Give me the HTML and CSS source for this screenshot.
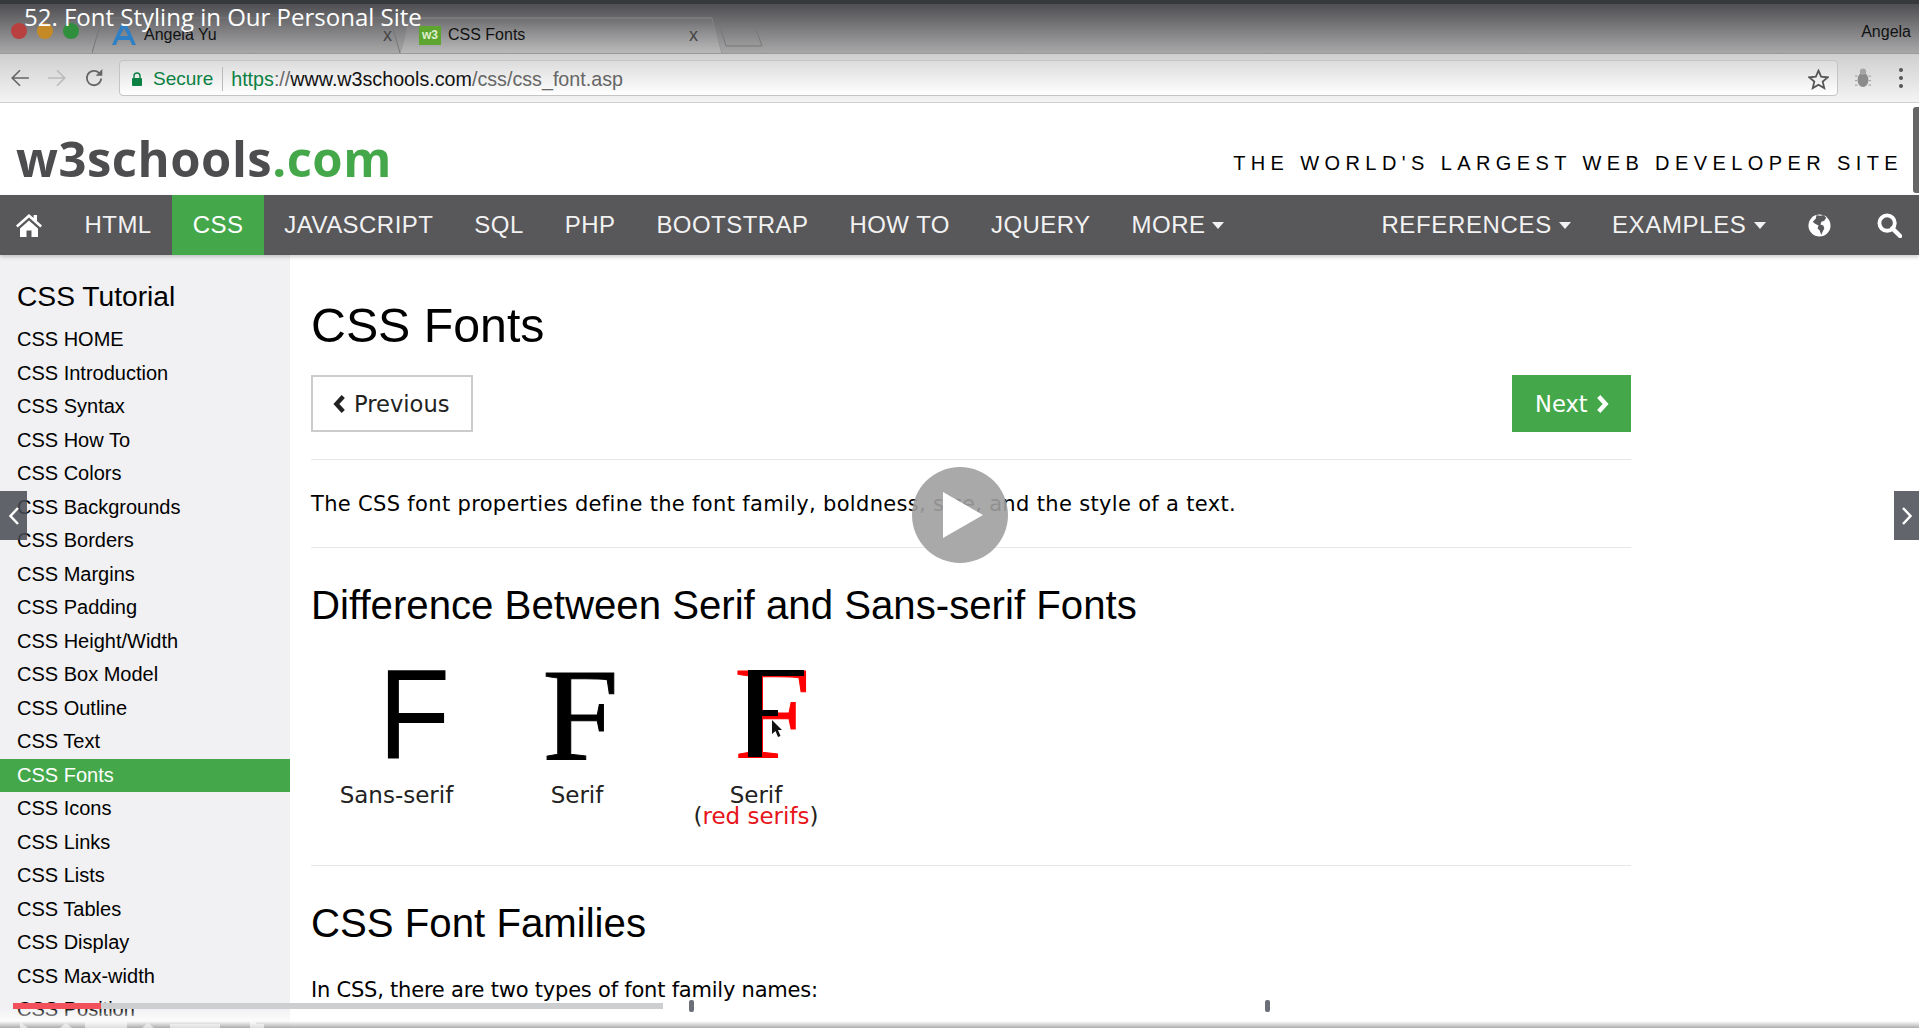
FILE: index.html
```html
<!DOCTYPE html>
<html lang="en">
<head>
    <meta charset="UTF-8">
    <title>CSS Fonts</title>
    <link rel="stylesheet" href="styles.css">
</head>
<body>
    <!-- Browser window top -->
    <div class="tabstrip">
        <div class="lights">
            <span class="light red"></span>
            <span class="light amber"></span>
            <span class="light green"></span>
        </div>
        <div class="tab tab-back">
            <svg class="tab-shape" viewBox="0 0 310 36" preserveAspectRatio="none"><path d="M0 36 L10 1 H298 L308 36" fill="none" stroke="#777"/></svg>
            <svg class="favicon" viewBox="0 0 24 20"><path d="M9 0h6l9 20h-4l-2-5H6l-2 5H0z M8 11h8l-4-8z" fill="#2f7fc4" fill-rule="evenodd"/></svg>
            <span class="tab-title">Angela Yu</span>
            <span class="tab-close">x</span>
        </div>
        <div class="tab tab-front">
            <svg class="tab-shape" viewBox="0 0 322 36" preserveAspectRatio="none"><path d="M0 36 L10 1 H312 L322 36" fill="none" stroke="#888"/></svg>
            <span class="favicon-w3">w3</span>
            <span class="tab-title">CSS Fonts</span>
            <span class="tab-close">x</span>
        </div>
        <svg class="new-tab" viewBox="0 0 44 22"><path d="M1 1 H36 L43 21 H7 Z" fill="none" stroke="#777"/></svg>
        <span class="profile">Angela</span>
    </div>

    <div class="toolbar">
        <div class="nav-buttons">
            <svg class="tool-icon" viewBox="0 0 18 18"><path d="M17 9H2M9 2 2 9l7 7" fill="none" stroke="#666" stroke-width="1.5"/></svg>
            <svg class="tool-icon" viewBox="0 0 18 18"><path d="M1 9h15M9 2l7 7-7 7" fill="none" stroke="#bbb" stroke-width="1.5"/></svg>
            <svg class="tool-icon" viewBox="0 0 18 18"><path d="M15.5 9.5A6.5 6.5 0 1 1 13.6 4.4" fill="none" stroke="#666" stroke-width="1.6"/><path d="M16.500 1v6h-6z" fill="#666"/></svg>
        </div>
        <div class="address">
            <svg class="lock" viewBox="0 0 12 14"><path d="M3 6V4a3 3 0 0 1 6 0v2" fill="none" stroke="#0b8043" stroke-width="1.4"/><rect y="6" x="1" width="10" height="8" rx="1" fill="#0b8043"/></svg>
            <span class="secure">Secure</span>
            <span class="url"><span class="url-scheme">https</span><span class="url-dim">://</span><span class="url-host">www.w3schools.com</span><span class="url-dim">/css/css_font.asp</span></span>
            <svg class="star" viewBox="0 0 20 20"><path d="M10 1.500l2.500 5.800 6.300.6-4.800 4.100 1.500 6.200L10 15l-5.500 3.200L6 12 1.200 7.900l6.300-.6z" fill="none" stroke="#555" stroke-width="1.7"/></svg>
        </div>
        <svg class="bug" viewBox="0 0 20 24"><ellipse cx="10" cy="14" rx="6" ry="8" fill="#8b8b8b"/><circle cx="10" cy="5" r="3.500" fill="#a5a5a5"/><path d="M1 10h3M1 15h3M1 20h3M16 10h3M16 15h3M16 20h3" stroke="#aaa" stroke-width="1.300"/></svg>
        <div class="menu-dots"><span></span><span></span><span></span></div>
    </div>

    <!-- Site header -->
    <header class="site-head">
        <div class="logo">w3schools<span class="logo-com">.com</span></div>
        <div class="tagline">THE WORLD'S LARGEST WEB DEVELOPER SITE</div>
    </header>

    <nav class="topnav">
        <a class="nav-home">
            <svg viewBox="0 0 26 24"><path d="M13 1 0 12.500l1.700 2L13 4.600l11.300 9.900 1.700-2-5-4.400V2h-3.400v3.100z" fill="#fff"/><path d="M4 15.500 13 7.500l9 8V24h-6.500v-6.500h-5V24H4z" fill="#fff"/></svg>
        </a>
        <a>HTML</a>
        <a class="active">CSS</a>
        <a>JAVASCRIPT</a>
        <a>SQL</a>
        <a>PHP</a>
        <a>BOOTSTRAP</a>
        <a>HOW TO</a>
        <a>JQUERY</a>
        <a>MORE <i class="caret"></i></a>
        <div class="nav-right">
            <a>REFERENCES <i class="caret"></i></a>
            <a>EXAMPLES <i class="caret"></i></a>
            <a class="nav-icon">
                <svg viewBox="0 0 24 24" width="23" height="23"><circle cx="12" cy="12" r="11.500" fill="#fff"/><path d="M9 1c2 1 5 1 7 0l3 3-2 3-3 1-1 3 3 1 1 3-2 4-1 3-2-5-2-2 1-3-4-2-2-2 3-3z" fill="#58575a"/></svg>
            </a>
            <a class="nav-icon nav-search">
                <svg viewBox="0 0 26 26" width="25" height="25"><circle cx="10.500" cy="10.500" r="8" fill="none" stroke="#fff" stroke-width="4"/><path d="M16 16l8 8" stroke="#fff" stroke-width="4.500" stroke-linecap="round"/></svg>
            </a>
        </div>
    </nav>

    <div class="page">
        <aside class="sidebar">
            <h2>CSS Tutorial</h2>
            <a>CSS HOME</a>
            <a>CSS Introduction</a>
            <a>CSS Syntax</a>
            <a>CSS How To</a>
            <a>CSS Colors</a>
            <a>CSS Backgrounds</a>
            <a>CSS Borders</a>
            <a>CSS Margins</a>
            <a>CSS Padding</a>
            <a>CSS Height/Width</a>
            <a>CSS Box Model</a>
            <a>CSS Outline</a>
            <a>CSS Text</a>
            <a class="active">CSS Fonts</a>
            <a>CSS Icons</a>
            <a>CSS Links</a>
            <a>CSS Lists</a>
            <a>CSS Tables</a>
            <a>CSS Display</a>
            <a>CSS Max-width</a>
            <a>CSS Position</a>
        </aside>

        <main class="content">
            <h1>CSS Fonts</h1>
            <div class="pager">
                <a class="btn btn-prev"><svg viewBox="0 0 10 16"><path d="M8 2 2.500 8 8 14" fill="none" stroke="currentColor" stroke-width="3.500"/></svg> Previous</a>
                <a class="btn btn-next">Next <svg viewBox="0 0 10 16"><path d="M2 2l5.500 6L2 14" fill="none" stroke="currentColor" stroke-width="3.500"/></svg></a>
            </div>
            <hr>
            <p class="lead lead-wide">The CSS font properties define the font family, boldness, size, and the style of a text.</p>
            <hr>
            <h2>Difference Between Serif and Sans-serif Fonts</h2>

            <div class="fonts-figure">
                <div class="figure-item item-sans">
                    <div class="big-f f-sans">F</div>
                    <div class="figure-label">Sans-serif</div>
                </div>
                <div class="figure-item item-serif">
                    <div class="big-f f-serif">F</div>
                    <div class="figure-label">Serif</div>
                </div>
                <div class="figure-item item-red">
                    <svg class="f-red" viewBox="0 0 100 110" width="100" height="110">
                        <text transform="translate(13 97) scale(1.05 1)" class="f-red-text">F</text>
                        <rect x="27" y="10" width="56" height="6"/>
                        <rect x="27" y="10" width="14" height="87"/>
                        <rect x="41" y="50" width="16" height="6"/>
                    </svg>
                    <div class="figure-label">Serif<br>(<span class="red-word">red serifs</span>)</div>
                </div>
            </div>

            <hr>
            <h2>CSS Font Families</h2>
            <p class="lead lead-narrow">In CSS, there are two types of font family names:</p>
        </main>
    </div>

    <!-- Video player on top of the page -->
    <div class="video-title">52. Font Styling in Our Personal Site</div>
    <div class="scroll-thumb"></div>
    <div class="side-arrow arrow-left"><svg viewBox="0 0 12 20"><path d="M10 2 2.500 10l7.500 8" fill="none" stroke="#fff" stroke-width="2.500"/></svg></div>
    <div class="side-arrow arrow-right"><svg viewBox="0 0 12 20"><path d="M2 2l7.500 8L2 18" fill="none" stroke="#fff" stroke-width="2.500"/></svg></div>
    <div class="play-btn"><svg viewBox="0 0 40 46" width="40" height="46"><path d="M0 0 40 23 0 46z" fill="#fff"/></svg></div>
    <svg class="cursor" viewBox="0 0 12 18" width="12" height="18"><path d="M1 0v14l3.500-3 2.500 6 2.500-1-2.500-6H11z" fill="#111"/></svg>
    <div class="player-fade"></div>
    <svg class="player-controls" viewBox="0 0 270 6" width="270" height="6">
        <path d="M20 0l8 6H20zM60 6l6-5 6 5zM85 0h42v6H85zM142 6l6-5 6 5zM170 2h50v4h-50zM250 0h6v2h8v4h-14z" fill="#fff"/>
    </svg>
    <div class="seek-bar"><div class="seek-done"></div></div>
    <span class="seek-mark mark-a"></span>
    <span class="seek-mark mark-b"></span>
</body>
</html>
```

FILE: styles.css
```css
* {
    box-sizing: border-box;
}

html, body {
    margin: 0;
    padding: 0;
}

body {
    position: relative;
    width: 1919px;
    height: 1028px;
    overflow: hidden;
    display: flex;
    flex-direction: column;
    background-color: #fff;
    font-family: "Liberation Sans", Arial, sans-serif;
    color: #000;
}

/* Tab strip */
.tabstrip {
    position: relative;
    flex: none;
    height: 54px;
    display: flex;
    align-items: flex-end;
    padding-left: 92px;
    border-top: 4px solid #37383b;
    border-bottom: 1px solid #999;
    background: linear-gradient(#4f4f53, #a8a8a9);
    font-size: 16px;
    color: #111;
}

.lights {
    position: absolute;
    left: 11px;
    top: 19px;
    display: flex;
    gap: 10px;
}

.light {
    width: 16px;
    height: 16px;
    border-radius: 50%;
}

.light.red { background-color: #b8403f; }
.light.amber { background-color: #c58a25; }
.light.green { background-color: #2f8f3c; }

.tab {
    position: relative;
    height: 36px;
    display: flex;
    align-items: center;
}

.tab-back {
    width: 310px;
    padding-left: 20px;
}

.tab-front {
    width: 322px;
    margin-left: -2px;
    padding-left: 19px;
    background: linear-gradient(rgba(255, 255, 255, 0.02), rgba(255, 255, 255, 0.2));
    clip-path: polygon(0 100%, 10px 0, 312px 0, 100% 100%);
}

.tab-shape {
    position: absolute;
    left: 0;
    top: 0;
    width: 100%;
    height: 100%;
}

.favicon {
    width: 24px;
    height: 20px;
    margin-right: 8px;
}

.favicon-w3 {
    width: 22px;
    height: 19px;
    margin-right: 7px;
    background-color: #5da52f;
    color: #dff0cf;
    font-size: 12px;
    font-weight: bold;
    line-height: 19px;
    text-align: center;
}

.tab-title {
    flex: 1;
}

.tab-close {
    margin-right: 10px;
    font-size: 18px;
    color: #444;
}

.tab-front .tab-close {
    margin-right: 24px;
}

.new-tab {
    width: 44px;
    height: 22px;
    margin: 0 0 6px -3px;
}

.profile {
    position: absolute;
    right: 8px;
    top: 19px;
}

/* Toolbar with address bar */
.toolbar {
    flex: none;
    height: 49px;
    display: flex;
    align-items: center;
    border-bottom: 1px solid #d0d0d0;
    background: linear-gradient(#cfcfcf, #f4f4f4);
}

.nav-buttons {
    width: 119px;
    display: flex;
    gap: 17px;
    padding-left: 10px;
}

.tool-icon {
    width: 20px;
    height: 20px;
}

.address {
    width: 1719px;
    height: 36px;
    display: flex;
    align-items: center;
    padding: 2px 8px 0 11px;
    border: 1px solid #c4c4c4;
    border-radius: 4px;
    background: linear-gradient(#dcdcdc, #fff);
    font-size: 19px;
}

.lock {
    width: 12px;
    height: 14px;
    margin-right: 10px;
}

.secure {
    padding-right: 9px;
    border-right: 1px solid #bbb;
    color: #0b8043;
    line-height: 24px;
}

.url {
    flex: 1;
    padding-left: 8px;
    font-size: 19.700px;
}

.url-scheme { color: #0b8043; }
.url-dim { color: #666; }
.url-host { color: #111; }

.star {
    width: 21px;
    height: 21px;
}

.bug {
    width: 18px;
    height: 22px;
    margin-left: 16px;
}

.menu-dots {
    display: flex;
    flex-direction: column;
    gap: 4px;
    margin-left: 27px;
}

.menu-dots span {
    width: 4px;
    height: 4px;
    border-radius: 50%;
    background-color: #555;
}

/* Site header */
.site-head {
    flex: none;
    height: 92px;
    display: flex;
    justify-content: space-between;
    padding: 0 16px 0 16px;
}

.logo {
    margin-top: 25px;
    font-family: "Open Sans", sans-serif;
    font-size: 49px;
    font-weight: 700;
    line-height: 60px;
    letter-spacing: 0.500px;
    color: #4d4c4f;
}

.logo-com {
    color: #44a84b;
}

.tagline {
    margin-top: 48px;
    font-size: 20px;
    line-height: 24px;
    letter-spacing: 5.400px;
    white-space: nowrap;
}

/* Top navigation */
.topnav {
    position: relative;
    z-index: 1;
    flex: none;
    height: 60px;
    display: flex;
    background-color: #58575a;
    box-shadow: 0 2px 4px rgba(0, 0, 0, 0.2);
    color: #f2f2f2;
    font-size: 24px;
    letter-spacing: 0.450px;
}

.topnav a {
    display: flex;
    align-items: center;
    gap: 7px;
    padding: 0 20.500px;
}

.topnav .nav-home {
    width: 64px;
    padding: 0 0 0 16px;
}

.nav-home svg {
    width: 26px;
    height: 24px;
}

.topnav a.active {
    background-color: #44a84b;
    color: #fff;
}

.caret {
    width: 0;
    height: 0;
    border-top: 7px solid currentColor;
    border-left: 6.500px solid transparent;
    border-right: 6.500px solid transparent;
}

.nav-right {
    margin-left: auto;
    display: flex;
    letter-spacing: 0.650px;
}

.topnav .nav-icon {
    padding: 0 22px;
}

.topnav .nav-search {
    padding: 0 17px 0 24px;
}

/* Page body */
.page {
    flex: 1;
    display: flex;
    min-height: 0;
}

.sidebar {
    flex: none;
    width: 290px;
    padding-top: 23px;
    background-color: #f1f0f2;
    font-size: 20px;
    overflow: hidden;
}

.sidebar h2 {
    margin: 0 0 9px;
    padding-left: 17px;
    font-size: 28.200px;
    font-weight: normal;
    line-height: 36px;
}

.sidebar a {
    display: block;
    padding-left: 17px;
    line-height: 33.500px;
    height: 33.500px;
}

.sidebar a.active {
    background-color: #44a84b;
    color: #fff;
}

.content {
    width: 1320px;
    margin-left: 21px;
    padding-top: 40px;
}

.content h1 {
    margin: 0 0 20px;
    font-size: 48.300px;
    font-weight: normal;
    line-height: 60px;
}

.content h2 {
    margin: 0;
    font-size: 40.200px;
    font-weight: normal;
    line-height: 50px;
}

.content hr {
    height: 1px;
    margin: 0;
    border: 0;
    background-color: #e6e6e6;
}

.pager {
    display: flex;
    justify-content: space-between;
    margin-bottom: 27px;
}

.btn {
    height: 57px;
    display: flex;
    align-items: center;
    gap: 8px;
    font-family: "DejaVu Sans", Verdana, sans-serif;
    font-size: 22.600px;
}

.btn svg {
    width: 13px;
    height: 20px;
}

.btn-prev {
    width: 162px;
    padding-left: 20px;
    border: 2px solid #ccc;
    color: #222;
}

.btn-next {
    width: 119px;
    padding-left: 23px;
    background-color: #44a84b;
    color: #fff;
}

.lead {
    margin: 0;
    font-family: "DejaVu Sans", Verdana, sans-serif;
    font-size: 21px;
    line-height: 30px;
}

.lead-wide {
    letter-spacing: 0.330px;
}

.lead-narrow {
    margin-top: 26px;
    letter-spacing: -0.220px;
}

.content hr + .lead {
    margin: 29px 0 28px;
}

.content hr + h2 {
    margin-top: 33px;
}

.fonts-figure {
    height: 234px;
    position: relative;
}

.figure-item {
    position: absolute;
    top: 29px;
    display: flex;
    flex-direction: column;
    align-items: center;
}

.item-sans { left: 0; width: 171px; }
.item-serif { left: 171px; width: 190px; }
.item-red { left: 355px; width: 180px; }

.big-f {
    height: 110px;
    line-height: 110px;
}

.f-sans {
    margin-left: 36px;
    font-size: 128px;
    transform: scaleX(0.92);
}

.f-serif {
    margin-left: 6px;
    font-family: "Liberation Serif", serif;
    font-size: 131px;
    -webkit-text-stroke: 1px #000;
    transform: scaleX(1.05);
}

.f-red {
    display: block;
    margin-left: 30px;
}

.f-red-text {
    font-family: "Liberation Serif", serif;
    font-size: 131px;
    fill: #f00;
    stroke: #f00;
    stroke-width: 1px;
}

.figure-label {
    margin-top: 15px;
    font-family: "DejaVu Sans", Verdana, sans-serif;
    font-size: 23px;
    line-height: 21px;
    text-align: center;
    color: #222;
}

.red-word {
    color: #e8141c;
}

/* Player overlays */
.video-title {
    position: absolute;
    left: 24px;
    top: 0;
    font-family: "Open Sans", sans-serif;
    font-size: 24px;
    line-height: 33px;
    color: #fff;
    white-space: nowrap;
}

.scroll-thumb {
    position: absolute;
    right: 0;
    top: 107px;
    width: 6px;
    height: 86px;
    border-radius: 3px 0 0 3px;
    background-color: #666;
}

.side-arrow {
    position: absolute;
    top: 491px;
    height: 49px;
    display: flex;
    align-items: center;
    justify-content: center;
    background-color: rgba(70, 75, 82, 0.85);
}

.side-arrow svg {
    width: 12px;
    height: 20px;
}

.arrow-left { left: 0; width: 27px; }
.arrow-right { right: 0; width: 25px; }

.play-btn {
    position: absolute;
    left: 912px;
    top: 467px;
    width: 96px;
    height: 96px;
    display: flex;
    align-items: center;
    justify-content: center;
    padding-left: 6px;
    border-radius: 50%;
    background-color: rgba(160, 160, 160, 0.9);
}

.cursor {
    position: absolute;
    left: 771px;
    top: 720px;
}

.player-fade {
    position: absolute;
    left: 0;
    right: 0;
    bottom: 0;
    height: 20px;
    background: linear-gradient(rgba(255, 255, 255, 0), rgba(255, 255, 255, 0.8) 65%, rgba(165, 165, 165, 0.9));
}

.player-controls {
    position: absolute;
    left: 0;
    bottom: 0;
    opacity: 0.6;
}

.seek-bar {
    position: absolute;
    left: 13px;
    top: 1003px;
    width: 650px;
    height: 6px;
    background-color: #ccced0;
}

.seek-done {
    width: 88px;
    height: 100%;
    background-color: #f2505a;
}

.seek-mark {
    position: absolute;
    top: 1000px;
    width: 5px;
    height: 12px;
    border-radius: 2px;
    background-color: #6b7078;
}

.mark-a { left: 689px; }
.mark-b { left: 1265px; }
```
